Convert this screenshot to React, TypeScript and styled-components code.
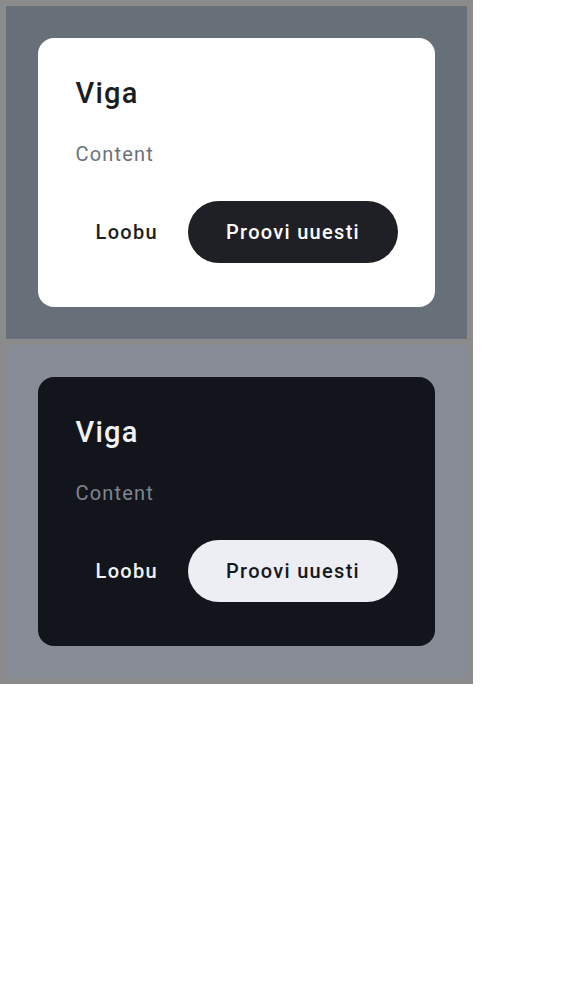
import styled, { createGlobalStyle } from 'styled-components';

const GlobalStyle = createGlobalStyle`
	html, body {
		margin: 0;
		padding: 0;
		background: #ffffff;
		font-family: Roboto, 'Noto Sans', Arial, sans-serif;
	}
`;

type Mode = 'light' | 'dark';

const palette = {
	light: {
		backdrop: '#676f79',
		surface: '#ffffff',
		title: '#1c1d22',
		body: '#6b717b',
		text: '#1d1e23',
		fill: '#1f2026',
		onFill: '#ffffff',
	},
	dark: {
		backdrop: '#878c96',
		surface: '#12151b',
		title: '#f0f2f6',
		body: '#80868f',
		text: '#f0f2f6',
		fill: '#eceef3',
		onFill: '#16181d',
	},
};

const Frame = styled.div`
	width: 473px;
	box-sizing: border-box;
	padding: 6px;
	background: #8b8b8b;
	display: flex;
	flex-direction: column;
	gap: 6px;
`;

const Panel = styled.section<{ $mode: Mode }>`
	height: 333px;
	box-sizing: border-box;
	padding: 32px;
	background: ${(p) => palette[p.$mode].backdrop};
	display: flex;
`;

const Dialog = styled.div<{ $mode: Mode }>`
	flex: 1;
	min-width: 0;
	box-sizing: border-box;
	padding: 37.5px 37px 44px 37.5px;
	border-radius: 16px;
	background: ${(p) => palette[p.$mode].surface};
	display: flex;
	flex-direction: column;
`;

const Title = styled.h2<{ $mode: Mode }>`
	margin: 0;
	font-size: 29px;
	line-height: 34px;
	font-weight: 500;
	letter-spacing: 1.2px;
	color: ${(p) => palette[p.$mode].title};
`;

const Body = styled.p<{ $mode: Mode }>`
	margin: 30px 0 0;
	font-size: 20px;
	line-height: 28px;
	font-weight: 400;
	letter-spacing: 1.2px;
	color: ${(p) => palette[p.$mode].body};
`;

const Actions = styled.div`
	margin-top: auto;
	display: flex;
	justify-content: flex-end;
	align-items: center;
	gap: 8px;
`;

const Button = styled.button<{ $mode: Mode; $filled?: boolean }>`
	flex-shrink: 0;
	height: 62px;
	padding: 0 ${(p) => (p.$filled ? '38px' : '22px')};
	border: none;
	border-radius: 31px;
	white-space: nowrap;
	font-family: inherit;
	font-size: 20px;
	font-weight: 500;
	letter-spacing: 1.3px;
	cursor: pointer;
	background: ${(p) => (p.$filled ? palette[p.$mode].fill : 'transparent')};
	color: ${(p) => (p.$filled ? palette[p.$mode].onFill : palette[p.$mode].text)};
`;

const ErrorDialog = ({ mode }: { mode: Mode }) => (
	<Panel $mode={mode}>
		<Dialog $mode={mode}>
			<Title $mode={mode}>Viga</Title>
			<Body $mode={mode}>Content</Body>
			<Actions>
				<Button type='button' $mode={mode}>
					Loobu
				</Button>
				<Button type='button' $mode={mode} $filled>
					Proovi uuesti
				</Button>
			</Actions>
		</Dialog>
	</Panel>
);

const App = () => (
	<>
		<GlobalStyle />
		<Frame>
			<ErrorDialog mode='light' />
			<ErrorDialog mode='dark' />
		</Frame>
	</>
);

export default App;
